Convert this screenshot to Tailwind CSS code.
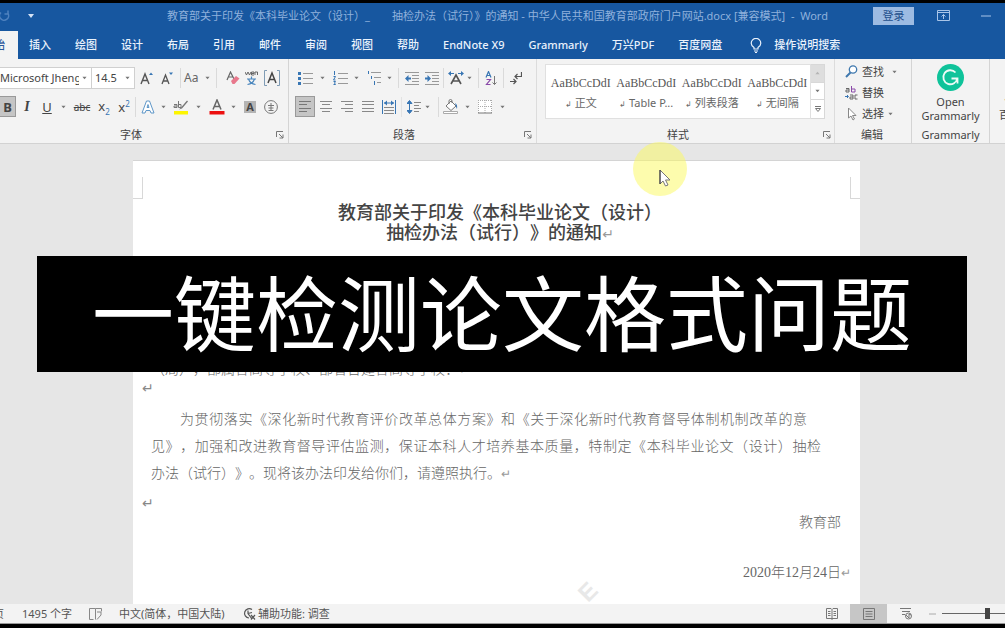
<!DOCTYPE html>
<html lang="zh-CN">
<head>
<meta charset="utf-8">
<meta name="viewport" content="width=device-width, initial-scale=1">
<title>Word</title>
<script src="https://cdn.jsdelivr.net/npm/@tailwindcss/browser@4"></script>
</head>
<body class="relative flex h-screen flex-col overflow-hidden bg-black pt-[3px] pb-1 font-['Noto_Sans','Noto_Sans_CJK_SC',sans-serif] text-[11px] leading-4 text-[#444]">
<svg class="hidden" aria-hidden="true">
  <symbol id="caret" viewBox="0 0 6 4"><path d="M0.5 0.5h5L3 3.5z" fill="#777"/></symbol>
  <symbol id="launch" viewBox="0 0 8 8"><path d="M.5 6V.5H7M3 3l4 4M7 3.5V7H3.5" fill="none" stroke="#777"/></symbol>
</svg>

<header class="shrink-0 bg-[#1757a0] text-white">
  <div class="flex h-7 items-center whitespace-nowrap pb-[3px] text-[#8fb1dc]">
    <button class="w-5" aria-label="重复"><svg width="10" height="12" viewBox="0 0 10 12" fill="none" stroke="#4f82bf" stroke-width="1.5"><path d="M1 2.500A4.500 4.500 0 1 0 8 3.500M8 .5v3.500H4.500"/></svg></button>
    <button class="w-[22px]" aria-label="自定义快速访问工具栏"><svg class="mx-auto" width="6" height="4" viewBox="0 0 6 4"><path d="M0 0h6L3 4z" fill="#d5e3f5"/></svg></button>
    <h1 class="ml-[125px] flex gap-[22px]"><span>教育部关于印发《本科毕业论文（设计）_</span><span>抽检办法（试行）》的通知 - 中华人民共和国教育部政府门户网站.docx [兼容模式] &nbsp;-&nbsp; Word</span></h1>
    <div class="ml-auto flex items-center">
      <button class="h-[18px] w-[41px] bg-[#9dbbe2] leading-[18px] text-[#1f4f8c]">登录</button>
      <button class="ml-[23px] w-[13px]" aria-label="功能区显示选项"><svg width="13" height="11" viewBox="0 0 13 11" fill="none" stroke="#a9c5e8"><path d="M.5.5h12v10H.5zM.5 2.500h12M6.500 9V4.500M4.500 6.500l2-2 2 2"/></svg></button>
      <button class="mr-[14px] ml-[31px] w-[10px]" aria-label="最小化"><svg width="10" height="2" viewBox="0 0 10 2"><path d="M0 1h10" stroke="#a9c5e8"/></svg></button>
    </div>
  </div>
  <nav class="flex h-7 items-stretch gap-6 whitespace-nowrap font-medium text-[#eaf2fc]">
    <button class="-mr-[13px] flex w-[18px] items-center justify-end overflow-hidden bg-[#f3f3f3] pr-[13px] text-[#2b579a]">始</button>
    <button>插入</button><button>绘图</button><button>设计</button><button>布局</button><button>引用</button><button>邮件</button><button>审阅</button><button>视图</button><button>帮助</button><button>EndNote X9</button><button>Grammarly</button><button>万兴PDF</button><button>百度网盘</button>
    <button class="ml-1 flex items-center gap-3"><svg width="12" height="15" viewBox="0 0 12 15" fill="none" stroke="#eaf2fc" stroke-width="1.200"><path d="M4 11V9.500C2 8 1.200 7 1.200 5.200a4.700 4.700 0 0 1 9.600 0C10.800 7 10 8 8 9.500V11zM4 13h4M5 14.500h2"/></svg>操作说明搜索</button>
  </nav>
</header>

<section class="flex h-[85px] shrink-0 overflow-hidden border-b border-[#d2d2d2] bg-[#f3f3f3]" aria-label="功能区">
  <!-- 字体 -->
  <div class="flex w-[289px] shrink-0 flex-col border-r border-[#d4d4d4] pt-2">
    <div class="flex h-[22px] items-center">
      <div class="relative h-[22px] w-[92px] border border-l-0 border-[#d0d0d0] bg-white">
        <select aria-label="字体" class="h-full w-[79px] appearance-none overflow-hidden bg-transparent text-[11px] outline-none"><option>Microsoft JhengHei</option></select>
        <svg class="absolute top-2 right-1" width="5" height="4"><use href="#caret"/></svg>
      </div>
      <div class="relative h-[22px] w-[43px] border border-l-0 border-[#d0d0d0] bg-white">
        <select aria-label="字号" class="h-full w-full appearance-none bg-transparent pl-[3px] text-[11px] outline-none"><option>14.5</option></select>
        <svg class="absolute top-2 right-1" width="5" height="4"><use href="#caret"/></svg>
      </div>
      <button class="ml-[2px] flex w-5 justify-center" aria-label="增大字号"><svg width="14" height="14" viewBox="0 0 14 14" fill="none"><path d="M1 13 5 3l4 10M2.500 9.500h5" stroke="#555" stroke-width="1.400"/><path d="m9 4 2-2.500L13 4z" fill="#3876b4"/></svg></button>
      <button class="flex w-5 justify-center" aria-label="减小字号"><svg width="14" height="14" viewBox="0 0 14 14" fill="none"><path d="M2 13 5.500 4 9 13M3.200 10h4.600" stroke="#555" stroke-width="1.300"/><path d="m9 1.500 2 2.500 2-2.500z" fill="#3876b4"/></svg></button>
      <span class="mx-[3px] h-5 w-px bg-[#dadada]"></span>
      <button class="flex w-[26px] items-center justify-between text-xs text-[#666]" aria-label="更改大小写">Aa<svg width="5" height="4"><use href="#caret"/></svg></button>
      <span class="mx-[6px] h-5 w-px bg-[#dadada]"></span>
      <button class="flex w-[19px] justify-center" aria-label="清除所有格式"><svg width="14" height="15" viewBox="0 0 14 15"><path d="M1 9 4.500 1 8 8M2.500 6h4" fill="none" stroke="#666" stroke-width="1.200"/><path d="m5 10 5-5 3.500 2.500-5 5.500H6.500z" fill="#e8788c"/></svg></button>
      <button class="flex w-[19px] flex-col items-center text-[#555]" aria-label="拼音指南"><svg width="13" height="16" viewBox="0 0 13 16" fill="none"><path d="m0 2 1.500 3L3 2l1.500 3L6 2M6.500 3.500h2.500V2H6.500v3H9M10 5V2h2.500v3" stroke="#666"/><path d="M6.500 6.500V9M2 9h9M3.500 9c1 3 3.500 5 7 5.500M9.500 9c-1 3-3.500 5-7 5.500" stroke="#4a86bd" stroke-width="1.200"/></svg></button>
      <button class="flex w-[22px] justify-center" aria-label="字符边框"><svg width="16" height="16" viewBox="0 0 16 16" fill="none"><path d="M3 .5H.5v15H3M13 .5h2.500v15H13" stroke="#7e9bb5"/><path d="M4 13 8 3l4 10M5.500 9.500h5" stroke="#444" stroke-width="1.500"/></svg></button>
    </div>
    <div class="mt-[7px] flex h-[21px] items-center">
      <button class="h-[21px] w-4 border border-l-0 border-[#999] bg-[#c5c5c5] text-[13px] font-bold" aria-label="加粗">B</button>
      <button class="w-[22px] font-['Liberation_Serif',serif] text-sm font-bold italic" aria-label="倾斜">I</button>
      <button class="w-[18px] text-[13px] underline" aria-label="下划线">U</button>
      <button class="flex w-[14px] justify-center" aria-label="下划线选项"><svg width="5" height="4"><use href="#caret"/></svg></button>
      <button class="w-6 text-[10px] line-through" aria-label="删除线">abc</button>
      <button class="w-5 text-[13px]" aria-label="下标">x<span class="align-sub text-[8px] leading-none text-[#3876b4]">2</span></button>
      <button class="w-5 text-[13px]" aria-label="上标">x<span class="align-super text-[8px] leading-none text-[#3876b4]">2</span></button>
      <span class="mx-px h-5 w-px bg-[#dadada]"></span>
      <button class="ml-1 flex w-[28px] items-center justify-between" aria-label="文本效果"><svg width="14" height="14" viewBox="0 0 14 14"><path d="M1 13 5.500 1h3L13 13h-3L9 10.500H5L4 13zM6 7.500h2L7 4.500z" fill="#fff" stroke="#5f97c8"/></svg><svg class="mr-[3px]" width="5" height="4"><use href="#caret"/></svg></button>
      <button class="ml-1 flex w-[28px] items-center justify-between" aria-label="突出显示颜色"><svg width="16" height="16" viewBox="0 0 16 16"><path d="M1 5.500h3v3H1V7h3M5.500 2v6.500h2.500v-3H5.500" fill="none" stroke="#777"/><path d="m14 1.500-6 7-2 2 3-1 6-7z" fill="#777"/><path d="M1 12h14v3.500H1z" fill="#fdf500"/></svg><svg width="5" height="4"><use href="#caret"/></svg></button>
      <button class="ml-2 flex w-[27px] items-center justify-between" aria-label="字体颜色"><svg width="16" height="16" viewBox="0 0 16 16"><path d="M4 10.500 8 1l4 9.500M5.500 7.500h5" fill="none" stroke="#666" stroke-width="1.500"/><path d="M.5 12h15v3.500H.5z" fill="#ec1010"/></svg><svg width="5" height="4"><use href="#caret"/></svg></button>
      <button class="ml-2 size-3 bg-[#b4b4b4] text-[11px] leading-3 font-bold" aria-label="字符底纹">A</button>
      <button class="ml-2 flex w-[14px]" aria-label="带圈字符"><svg width="14" height="14" viewBox="0 0 14 14" fill="none" stroke="#777"><circle cx="7" cy="7" r="6.400"/><path d="M7 3v8M4 5.500h6M4.500 8h5M4.500 10.500h5"/></svg></button>
    </div>
    <div class="mt-auto flex h-4 items-center pr-1"><span class="flex-1 pl-[120px]">字体</span><button aria-label="字体设置"><svg width="8" height="8"><use href="#launch"/></svg></button></div>
  </div>

  <!-- 段落 -->
  <div class="flex w-[248px] shrink-0 flex-col border-r border-[#dcdcdc] pt-2">
    <div class="flex h-[22px] items-center pl-[9px]">
      <button class="flex w-[27px] items-center justify-between" aria-label="项目符号"><svg width="15" height="14" viewBox="0 0 15 14"><path d="M5 2.500h10M5 7.500h10M5 12.500h10" stroke="#999"/><path d="M0 1h3v3H0zM0 6h3v3H0zM0 11h3v3H0z" fill="#3876b4"/></svg><svg width="5" height="4"><use href="#caret"/></svg></button>
      <button class="ml-2 flex w-[26px] items-center justify-between" aria-label="编号"><svg width="15" height="14" viewBox="0 0 15 14"><path d="M5 2.500h10M5 7.500h10M5 12.500h10" stroke="#999"/><path d="M1.500 0v4M.5 5.500h2L.5 9h2M.5 10.500h2l-1 1.500 1 1.500h-2" fill="none" stroke="#3876b4"/></svg><svg width="5" height="4"><use href="#caret"/></svg></button>
      <button class="ml-2 flex w-[25px] items-center justify-between" aria-label="多级列表"><svg width="15" height="14" viewBox="0 0 15 14"><path d="M4 1.500h10M7 6.500h7M10 11.500h4" stroke="#999"/><path d="M1.500 0v3M4.500 5v3M7.500 10v4" stroke="#3876b4"/></svg><svg width="5" height="4"><use href="#caret"/></svg></button>
      <span class="mx-[6px] h-5 w-px bg-[#dadada]"></span>
      <button class="flex w-[14px]" aria-label="减少缩进量"><svg width="14" height="13" viewBox="0 0 14 13"><path d="M0 .5h14M7 3.500h7M7 6.500h7M7 9.500h7M0 12.500h14" stroke="#999"/><path d="M0 6.500 3.500 3v2.500H6v2H3.500V10z" fill="#3876b4"/></svg></button>
      <button class="ml-[6px] flex w-[14px]" aria-label="增加缩进量"><svg width="14" height="13" viewBox="0 0 14 13"><path d="M0 .5h14M7 3.500h7M7 6.500h7M7 9.500h7M0 12.500h14" stroke="#999"/><path d="M6 6.500 2.500 3v2.500H0v2h2.500V10z" fill="#3876b4"/></svg></button>
      <span class="mx-1 h-5 w-px bg-[#dadada]"></span>
      <button class="flex w-[24px] items-center justify-between" aria-label="中文版式"><svg width="16" height="14" viewBox="0 0 16 14"><path d="M3 13 8 4l5 9M5 10h6" fill="none" stroke="#555" stroke-width="1.600"/><path d="M0 2.500 3 0v5zM16 2.500 13 0v5zM3 2h3v1H3zM10 2h3v1h-3z" fill="#3876b4"/></svg><svg width="5" height="4"><use href="#caret"/></svg></button>
      <span class="mx-[6px] h-5 w-px bg-[#dadada]"></span>
      <button class="flex w-3" aria-label="排序"><svg width="12" height="15" viewBox="0 0 12 15" fill="none"><path d="m1 6.500 2.500-6 2.500 6M2 4.500h3" stroke="#3876b4" stroke-width="1.200"/><path d="M1.500 8.500h4l-4 5h4" stroke="#8a4aa8" stroke-width="1.200"/><path d="M9.500 5v8.500M7.500 11.500l2 2 2-2" stroke="#777"/></svg></button>
      <span class="mx-[6px] h-5 w-px bg-[#dadada]"></span>
      <button class="flex w-3" aria-label="显示编辑标记"><svg width="12" height="13" viewBox="0 0 12 13" fill="none" stroke="#555"><path d="M11.500 0v4.500H5M7.500 2 5 4.500 7.500 7M0 9.500h6M3.500 7 6 9.500 3.500 12" stroke-width="1.200"/></svg></button>
    </div>
    <div class="mt-[7px] flex h-[21px] items-center pl-[6px]">
      <button class="flex h-[21px] w-5 items-center justify-center border border-[#999] bg-[#c5c5c5]" aria-label="左对齐"><svg width="12" height="13" viewBox="0 0 12 13"><path d="M0 1.500h12M0 4.500h8M0 8.500h12M0 11.500h8" stroke="#777"/></svg></button>
      <button class="ml-[5px] flex w-3" aria-label="居中"><svg width="12" height="13" viewBox="0 0 12 13"><path d="M0 1.500h12M2 4.500h8M0 8.500h12M2 11.500h8" stroke="#888"/></svg></button>
      <button class="ml-[9px] flex w-3" aria-label="右对齐"><svg width="12" height="13" viewBox="0 0 12 13"><path d="M0 1.500h12M4 4.500h8M0 8.500h12M4 11.500h8" stroke="#888"/></svg></button>
      <button class="ml-[9px] flex w-3" aria-label="两端对齐"><svg width="12" height="13" viewBox="0 0 12 13"><path d="M0 1.500h12M0 4.500h12M0 8.500h12M0 11.500h12" stroke="#888"/></svg></button>
      <button class="ml-2 flex w-[14px]" aria-label="分散对齐"><svg width="14" height="14" viewBox="0 0 14 14"><path d="M.5 0v14M13.500 0v14M2 3h10" stroke="#3876b4"/><path d="M2 3 5 .5v5zM12 3 9 .5v5z" fill="#3876b4"/><path d="M2 7.500h10M2 10.500h10M2 13.500h10" stroke="#888"/></svg></button>
      <span class="mx-[5px] h-5 w-px bg-[#e2e2e2]"></span>
      <button class="flex w-[23px] items-center justify-between" aria-label="行距"><svg width="14" height="14" viewBox="0 0 14 14"><path d="M2.500 2v10M0 3.500 2.500.5 5 3.500zM0 10.500l2.500 3 2.500-3z" stroke="#3876b4" fill="#3876b4"/><path d="M7 2.500h7M7 5.500h5M7 8.500h7M7 11.500h5" stroke="#888"/></svg><svg width="5" height="4"><use href="#caret"/></svg></button>
      <span class="ml-2 mr-1 h-5 w-px bg-[#dadada]"></span>
      <button class="flex w-[27px] items-center justify-between" aria-label="底纹"><svg width="16" height="15" viewBox="0 0 16 15"><path d="M3 7 8 2l5 5-5 4.500zM6 5V2a1.500 1.500 0 0 1 3 0v2" fill="#fff" stroke="#777"/><path d="M12 4c2 1 2.500 3 2 6-1-2-1-3-2-6z" fill="#3876b4"/><path d="M.5 12.500h14v2H.5z" fill="#fff" stroke="#aaa"/></svg><svg width="5" height="4"><use href="#caret"/></svg></button>
      <button class="ml-2 flex w-[27px] items-center justify-between" aria-label="边框"><svg width="14" height="14" viewBox="0 0 14 14"><path d="M0 0h14v13H0z" fill="#fff"/><path d="M.5 0v13M13.500 0v13M7 0v13M0 .5h14M0 6.500h14" stroke="#aaa" stroke-dasharray="1 1"/><path d="M0 13h14" stroke="#777"/></svg><svg width="5" height="4"><use href="#caret"/></svg></button>
    </div>
    <div class="mt-auto flex h-4 items-center pr-1"><span class="flex-1 pl-[104px]">段落</span><button aria-label="段落设置"><svg width="8" height="8"><use href="#launch"/></svg></button></div>
  </div>

  <!-- 样式 -->
  <div class="flex w-[298px] shrink-0 flex-col border-r border-[#dcdcdc] pt-[5px] pl-2">
    <div class="flex h-[55px] w-[280px]">
      <div class="grid flex-1 grid-cols-4 border border-[#e0e0e0] bg-white pl-[2px] text-center text-[#666]">
        <button class="pt-[3px]"><span class="block font-['Liberation_Serif',serif] text-xs leading-5 text-[#555]">AaBbCcDdI</span><span class="block leading-5"><small class="text-[8px]">↲</small> 正文</span></button>
        <button class="pt-[3px]"><span class="block font-['Liberation_Serif',serif] text-xs leading-5 text-[#555]">AaBbCcDdI</span><span class="block leading-5 whitespace-nowrap"><small class="text-[8px]">↲</small> Table P...</span></button>
        <button class="pt-[3px]"><span class="block font-['Liberation_Serif',serif] text-xs leading-5 text-[#555]">AaBbCcDdI</span><span class="block leading-5"><small class="text-[8px]">↲</small> 列表段落</span></button>
        <button class="pt-[3px]"><span class="block font-['Liberation_Serif',serif] text-xs leading-5 text-[#555]">AaBbCcDdI</span><span class="block leading-5"><small class="text-[8px]">↲</small> 无间隔</span></button>
      </div>
      <div class="grid w-[14px] grid-rows-3 divide-y divide-[#d8d8d8] border border-l-0 border-[#d8d8d8] bg-white">
        <button class="flex items-center justify-center bg-[#dedede]" aria-label="上一行"><svg class="rotate-180 opacity-40" width="5" height="4"><use href="#caret"/></svg></button>
        <button class="flex items-center justify-center" aria-label="下一行"><svg width="5" height="4"><use href="#caret"/></svg></button>
        <button class="flex items-center justify-center" aria-label="其他样式"><svg width="6" height="6" viewBox="0 0 6 6"><path d="M0 .5h6" stroke="#777"/><path d="M.5 2.500h5L3 5.500z" fill="none" stroke="#777"/></svg></button>
      </div>
    </div>
    <div class="mt-auto flex h-4 items-center pr-[3px]"><span class="flex-1 pl-[122px]">样式</span><button aria-label="样式设置"><svg width="8" height="8"><use href="#launch"/></svg></button></div>
  </div>

  <!-- 编辑 -->
  <div class="flex w-[77px] shrink-0 flex-col border-r border-[#d4d4d4] pt-[2px] pl-[10px]">
    <button class="flex h-[21px] items-center gap-1"><svg width="13" height="13" viewBox="0 0 13 13" fill="none" stroke="#3f78ae"><circle cx="8" cy="4.500" r="3.700" fill="#fff" stroke-width="1.300"/><path d="M5.500 7.500 1 12" stroke-width="2"/></svg>查找<svg class="ml-1" width="5" height="4"><use href="#caret"/></svg></button>
    <button class="flex h-[21px] items-center gap-1"><svg width="13" height="14" viewBox="0 0 13 14" fill="none"><path d="M1 2.500h3V6H1V4h3" stroke="#666"/><path d="M6.500 0v6H10V3H6.500" stroke="#8a4aa8"/><path d="M0 10.500h3M2 9l1.500 1.500L2 12" stroke="#3876b4"/><path d="M5 9h3v4H5v-2h3M12.500 9H10v4h2.500" stroke="#666"/></svg>替换</button>
    <button class="flex h-[21px] items-center gap-1"><svg width="13" height="14" viewBox="0 0 13 14"><path d="M3.500 1v10L6 9l2 4 1.500-1-2-3.500H11z" fill="#fff" stroke="#888"/></svg>选择<svg width="5" height="4"><use href="#caret"/></svg></button>
    <div class="mt-auto flex h-4 items-center pl-4">编辑</div>
  </div>

  <!-- Grammarly -->
  <div class="flex w-[78px] shrink-0 flex-col items-center border-r border-[#d4d4d4] pt-[5px]">
    <button class="flex flex-col items-center leading-[14px]"><svg class="mb-[4px]" width="27" height="27" viewBox="0 0 27 27" fill="none"><circle cx="13.500" cy="13.500" r="13.500" fill="#0fc39a"/><path d="M18.500 8.500a7 7 0 1 0 1.800 5.500M14.500 14.500h6v5" stroke="#eefbf7" stroke-width="1.800"/></svg>Open<span>Grammarly</span></button>
    <div class="mt-auto flex h-4 items-center">Grammarly</div>
  </div>
  <div class="flex flex-1 flex-col items-start overflow-hidden pt-[35px] pl-[9px]"><button class="leading-[14px] whitespace-nowrap">保存到<br>百度网盘</button></div>
</section>

<main class="min-h-0 flex-1 overflow-hidden bg-[#e6e6e6] pt-4">
  <article class="mr-[145px] ml-[133px] flex h-full flex-col border-t border-[#d4d4d4] bg-white font-['Liberation_Serif','Noto_Sans_CJK_SC',sans-serif] text-sm font-light text-[#666] [text-spacing-trim:space-all]">
    <div class="flex shrink-0 justify-between pt-4" aria-hidden="true"><span class="h-[22px] w-[10px] border-r border-b border-[#d8d8d8]"></span><span class="h-[22px] w-[10px] border-b border-l border-[#d8d8d8]"></span></div>
    <h2 class="mt-[2px] shrink-0 pl-[7px] text-center font-['Noto_Sans_CJK_TC',sans-serif] text-lg leading-5 font-medium text-[#444]" lang="zh-TW">教育部关于印发《本科毕业论文（设计）<br>抽检办法（试行）》的通知<span class="font-['DejaVu_Sans',sans-serif] text-sm leading-4 font-normal text-[#999]">↵</span></h2>
    <p class="mt-[118px] shrink-0 pl-[18px] leading-5">（局），部属各高等学校、部省合建各高等学校：<span class="font-['DejaVu_Sans',sans-serif] text-xs text-[#999]">↵</span></p>
    <p class="shrink-0 pl-[9px] font-['DejaVu_Sans',sans-serif] text-sm leading-4 text-[#888]">↵</p>
    <p class="mt-[10px] mr-[39px] ml-[18px] shrink-0 leading-[27px]">
      <span class="mr-[14px] ml-[29px] block [text-align-last:justify]">为贯彻落实《深化新时代教育评价改革总体方案》和《关于深化新时代教育督导体制机制改革的意</span>
      <span class="block [text-align-last:justify]">见》，加强和改进教育督导评估监测，保证本科人才培养基本质量，特制定《本科毕业论文（设计）抽检</span>
      <span class="block">办法（试行）》。现将该办法印发给你们，请遵照执行。<span class="font-['DejaVu_Sans',sans-serif] text-xs text-[#999]">↵</span></span>
    </p>
    <p class="mt-[6px] shrink-0 pl-[9px] font-['DejaVu_Sans',sans-serif] text-sm leading-5 text-[#888]">↵</p>
    <p class="shrink-0 pr-[19px] text-right leading-5">教育部</p>
    <div class="relative shrink-0 pt-[30px]">
      <p class="pr-[9px] text-right leading-5">2020年12月24日<span class="font-['DejaVu_Sans',sans-serif] text-xs text-[#999]">↵</span></p>
      <span class="absolute top-[43px] left-[447px] -rotate-45 font-['Liberation_Sans',sans-serif] text-2xl font-bold text-[#e8e8e8]" aria-hidden="true">E</span>
    </div>
  </article>
</main>

<footer class="z-10 flex h-5 shrink-0 items-center overflow-hidden border-b border-[#999] bg-[#f3f3f3] whitespace-nowrap text-[#555]">
  <span class="flex w-[22px]"><span class="flex w-1 justify-end overflow-hidden">页</span></span>
  <button class="w-[67px] text-left">1495 个字</button>
  <button class="w-[30px]" aria-label="校对"><svg width="14" height="12" viewBox="0 0 14 12" fill="none" stroke="#888"><path d="M4.500 11.500H.5V.5h6v11M6.500.5h6v3M8 4h4v3l-4 4.500"/></svg></button>
  <button class="w-[124px] text-left">中文(简体，中国大陆)</button>
  <button class="flex items-center gap-[2px]"><svg width="13" height="13" viewBox="0 0 13 13" fill="none" stroke="#555"><path d="M9 2.500A4.700 4.700 0 1 0 6 11M5 3.500v3L9 12M5 6.500l4-1M8 8l4 4.500M12 8l-4 4.500" stroke-width="1.200"/></svg>辅助功能: 调查</button>
  <div class="ml-auto flex h-full items-center">
    <button class="mr-3" aria-label="阅读视图"><svg width="12" height="12" viewBox="0 0 12 12" fill="none" stroke="#777"><path d="M.5.5h4.500l1 1 1-1h4.500v10H.5zM6 1.500V12M2 3.500h2.500M2 5.500h2.500M2 7.500h2.500M7.500 3.500H10M7.500 5.500H10M7.500 7.500H10"/></svg></button>
    <button class="flex h-full w-[37px] items-center justify-center bg-[#c6c6c6]" aria-label="页面视图"><svg width="12" height="12" viewBox="0 0 12 12" fill="none" stroke="#777"><path d="M.5.5h11v11H.5zM2.500 3.500h7M2.500 6h7M2.500 8.500h7"/></svg></button>
    <button class="ml-[13px]" aria-label="Web 版式视图"><svg width="13" height="13" viewBox="0 0 13 13" fill="none" stroke="#777"><path d="M0 1.500h11M2 4.500h8M2 7.500h3"/><circle cx="8.500" cy="9" r="3"/><path d="m6 8 3 3V7l2 1" /></svg></button>
    <button class="ml-4" aria-label="缩小"><svg width="7" height="2" viewBox="0 0 7 2"><path d="M0 1h7" stroke="#aaa"/></svg></button>
    <input type="range" aria-label="缩放" min="0" max="100" value="50" class="-mr-7 ml-[6px] h-3 w-[91px] appearance-none bg-transparent bg-[linear-gradient(#666,#666)] bg-[length:100%_1px] bg-center bg-no-repeat [&::-webkit-slider-thumb]:h-[11px] [&::-webkit-slider-thumb]:w-[5px] [&::-webkit-slider-thumb]:appearance-none [&::-webkit-slider-thumb]:bg-[#444]">
  </div>
</footer>

<!-- 鼠标高亮 -->
<div class="absolute top-[142px] left-[633px] size-[54px] rounded-full bg-[#fbf95c]/50"></div>
<svg class="absolute top-[169px] left-[659px]" width="12" height="18" viewBox="0 0 12 18"><path d="M1 1v14l3-3 2.500 5 2.500-1-2.500-5H11z" fill="#fff" stroke="#777"/><path d="M1 1v14" stroke="#333"/></svg>

<!-- 字幕横幅 -->
<div class="absolute top-64 right-[38px] left-[37px] flex h-[116px] items-center justify-center bg-black pb-2 font-['Noto_Sans_CJK_SC',sans-serif] text-[82px] leading-none whitespace-nowrap text-white">一键检测论文格式问题</div>
</body>
</html>
